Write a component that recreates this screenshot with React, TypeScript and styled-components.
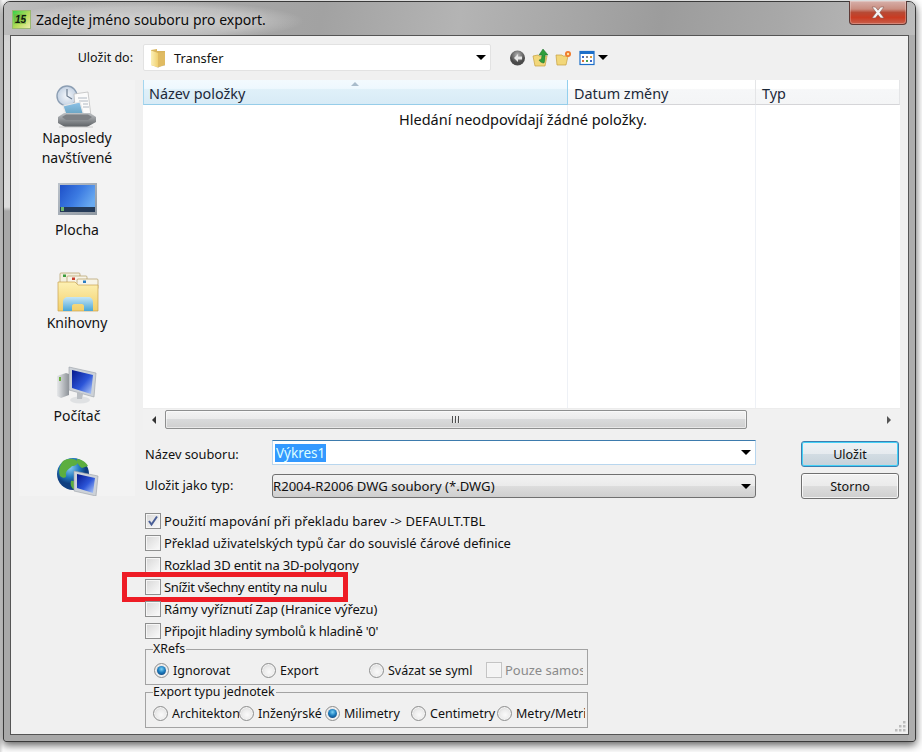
import React from "react";
import styled, { createGlobalStyle } from "styled-components";

const Global = createGlobalStyle`
  html, body { margin: 0; padding: 0; background: #fff; }
  body { font-family: "Noto Sans", "Open Sans", sans-serif; font-size: 13px; color: #111; }
  * { box-sizing: border-box; }
`;

const Stage = styled.div`
  width: 922px; height: 752px; padding: 1px 6px 10px 3px; overflow: hidden;
  background: linear-gradient(90deg, #d9d9d9 0, #fff 3px);
`;
const Win = styled.div`
  width: 913px; height: 741px; display: flex; flex-direction: column;
  border: 1px solid #3a3a3a; border-radius: 7px 7px 3px 3px;
  padding: 0 6px 6px;
  box-shadow: 0 3px 8px rgba(0,0,0,.65);
  background:
    linear-gradient(#adadad,#adadad) right top / 7px 100% no-repeat,
    linear-gradient(180deg, #b9b9b9 0, #d4d4d4 40px, #dcdcdc 205px, #a8a8a8 209px, #a8a8a8 100%);
`;
const TitleBar = styled.div`
  height: 33px; margin: 0 -6px; padding: 0 8px 0 8px; display: flex; align-items: flex-start;
  border-radius: 6px 6px 0 0;
  background:
    radial-gradient(ellipse 150px 20px at 150px 19px, rgba(222,222,222,.7) 0, rgba(215,215,215,.45) 70%, transparent 100%),
    linear-gradient(100deg, #bdbdbd 0, #a9a9a9 18%, #a2a2a2 35%, #b4b4b4 50%, #9c9c9c 72%, #a8a8a8 85%, #bcbcbc 100%);
`;
const TitleIcon = styled.svg`
  width: 19px; height: 19px; margin-top: 8px; flex: none;
`;
const TitleText = styled.div`
  margin: 8px 0 0 5px; font-size: 14px; line-height: 20px; color: #0c0c0c; flex: 1;
  font-family: "Noto Sans", sans-serif;
  text-shadow: 0 0 8px rgba(255,255,255,.6);
`;
const CloseBtn = styled.div`
  width: 58px; height: 24px; margin-top: -1px; flex: none;
  border: 1px solid #5e3a36; border-top: none; border-radius: 0 0 4px 4px;
  display: flex; align-items: center; justify-content: center;
  background: linear-gradient(180deg, #d6b0aa 0, #c98d80 35%, #b74a35 50%, #c93b22 72%, #c8604c 100%);
  box-shadow: inset 0 0 0 1px rgba(255,255,255,.25);
`;
const Panel = styled.div`
  flex: 1; display: flex; flex-direction: column;
  border: 1px solid #555; background: #f0f0f0; padding: 8px 8px 0 8px;
  position: relative;
`;
const CornerGrip = styled.svg`
  position: absolute; right: 1px; bottom: 1px; width: 13px; height: 13px;
`;
const SaveRow = styled.div`
  height: 27px; margin-bottom: 9px; display: flex; align-items: center;
`;
const SaveLabel = styled.div`
  width: 114px; margin-right: 10px; text-align: right; font-size: 12.5px;
`;
const SaveCombo = styled.div`
  width: 348px; height: 27px; background: #fff; border: 1px solid #e2e2e2;
  border-radius: 2px; display: flex; align-items: center; padding: 0 4px 0 6px;
  font-size: 12.8px;
`;
const ComboIcon = styled.svg`
  width: 16px; height: 20px; margin-right: 8px; flex: none;
`;
const Spacer = styled.div`flex: 1;`;
const Caret = styled.span<{ $dir?: "down" | "up" | "left" | "right"; $size?: number; $color?: string }>`
  display: inline-block; width: 0; height: 0; flex: none;
  ${({ $dir = "down", $size = 5, $color = "#000" }) =>
    $dir === "down" ? `border-left:${$size}px solid transparent;border-right:${$size}px solid transparent;border-top:${$size}px solid ${$color};`
    : $dir === "up" ? `border-left:${$size}px solid transparent;border-right:${$size}px solid transparent;border-bottom:${$size}px solid ${$color};`
    : $dir === "left" ? `border-top:${$size}px solid transparent;border-bottom:${$size}px solid transparent;border-right:${$size}px solid ${$color};`
    : `border-top:${$size}px solid transparent;border-bottom:${$size}px solid transparent;border-left:${$size}px solid ${$color};`}
`;
const ToolIcons = styled.div`
  display: flex; align-items: center; margin-left: 18px; gap: 6px;
`;
const ToolIcon = styled.svg`
  width: 17px; height: 18px; flex: none;
`;
const ToolMenu = styled.div`
  display: flex; align-items: center; gap: 2px; margin-left: 1px;
`;

const MainRow = styled.div`
  display: flex; gap: 8px; height: 419px;
`;
const Sidebar = styled.div`
  width: 116px; height: 416px; background: #f3f3f3; overflow: hidden; flex: none;
`;
const Place = styled.div<{ $h: number }>`
  height: ${p => p.$h}px; display: flex; flex-direction: column; align-items: center;
  text-align: center; font-size: 14px; line-height: 20px; color: #111;
`;
const PlaceIcon = styled.svg`
  width: 48px; height: 48px; flex: none;
`;
const RightCol = styled.div`
  width: 757px; flex: none; display: flex; flex-direction: column;
`;
const List = styled.div`
  height: 350px; background: #fff; display: flex; flex-direction: column;
`;
const Header = styled.div`
  height: 25px; display: flex; flex: none;
`;
const HeadCell = styled.div<{ $w: number; $active?: boolean }>`
  width: ${p => p.$w}px; position: relative; font-size: 14.4px; line-height: 27px; padding-left: ${p => (p.$active ? 5 : 6)}px;
  color: #1c2838;
  background: ${p => p.$active
    ? "linear-gradient(180deg,#f3fafe 0,#eef8fe 35%,#dff0f9 40%,#d8ebf6 100%)"
    : "linear-gradient(180deg,#fff 0,#fff 35%,#f6f7f8 40%,#f4f5f6 100%)"};
  border-bottom: 1px solid ${p => (p.$active ? "#96cde9" : "#d5d5d8")};
  border-right: 1px solid ${p => (p.$active ? "#92cfee" : "#e4e5e7")};
  border-left: ${p => (p.$active ? "1px solid #a4d6ef" : "none")};
`;
const SortMark = styled.span`
  position: absolute; left: 207px; top: 1px; line-height: 0;
`;
const ListBody = styled.div`
  flex: 1; text-align: center; font-size: 14.5px; line-height: 20px; padding-top: 4px; padding-left: 3px;
  background:
    linear-gradient(#eef1f6,#eef1f6) 424px 0 / 1px 100% no-repeat,
    linear-gradient(#eef1f6,#eef1f6) 612px 0 / 1px 100% no-repeat,
    #fff;
`;
const HScroll = styled.div`
  height: 22px; flex: none; display: flex; align-items: center; background: #f1f1f1; border-top: 1px solid #ececec;
`;
const ScrollBtn = styled.div`
  width: 22px; height: 19px; flex: none; display: flex; align-items: center; justify-content: center;
`;
const ScrollThumb = styled.div`
  width: 582px; height: 19px; flex: none; border: 1px solid #8e8f8f; border-radius: 2px;
  background: linear-gradient(180deg,#f3f3f3 0,#ebebeb 45%,#d9dadb 50%,#cfcfcf 100%);
  display: flex; align-items: center; justify-content: center; gap: 1px;
  box-shadow: inset 0 0 0 1px rgba(255,255,255,.5);
`;
const Grip = styled.span`
  width: 2px; height: 7px; background: #4f4f4f; border-right: 1px solid #eee;
`;
const FormGrid = styled.div`
  margin-top: 10px; display: grid; grid-template-columns: 129px 484px 98px; column-gap: 0;
  grid-template-rows: 33px 26px; position: relative;
`;
const FieldLabel = styled.div<{ $top: number }>`
  padding-left: 2px; font-size: 12.8px; line-height: 18px; margin-top: ${p => p.$top}px;
`;
const NameInput = styled.div`
  height: 25px; background: #fff; border: 1px solid #b8d6ee; border-top-color: #3d7bad;
  display: flex; align-items: center; padding: 0 4px 0 2px; font-size: 13.5px;
`;
const Selected = styled.span`
  background: #3399ff; color: #dff; padding: 0 1px; line-height: 18px;
`;
const TypeCombo = styled.div`
  height: 24px; margin-top: 1px; border: 1px solid #707070; border-radius: 3px;
  background: linear-gradient(180deg,#f2f2f2 0,#ebebeb 48%,#dddddd 50%,#cfcfcf 100%);
  display: flex; align-items: center; padding: 0 4px 0 0; font-size: 13.1px;
`;
const ButtonCol = styled.div<{ $top: number }>`
  margin-left: 45px; width: 98px; height: 26px; margin-top: ${p => p.$top}px; position: relative;
`;
const DlgButton = styled.div<{ $primary?: boolean }>`
  width: 98px; height: 26px; border-radius: 3px; font-size: 12.6px; display: flex; align-items: center; justify-content: center;
  border: 1px solid ${p => (p.$primary ? "#3c7fb1" : "#707070")};
  background: ${p => p.$primary
    ? "linear-gradient(180deg,#eef2f5 0,#e6ebef 48%,#d2dce3 50%,#c6d2da 100%)"
    : "linear-gradient(180deg,#f2f2f2 0,#ebebeb 48%,#dddddd 50%,#cfcfcf 100%)"};
  box-shadow: inset 0 0 0 1px ${p => (p.$primary ? "#43d1f7" : "rgba(255,255,255,.75)")};
`;
const Options = styled.div`
  margin-top: 11px; margin-left: 126px; width: 443px; display: flex; flex-direction: column;
`;
const OptRow = styled.div<{ $track: number }>`
  height: 22px; display: flex; align-items: center; gap: 3px; position: relative; font-size: 13px; white-space: nowrap;
  letter-spacing: ${p => p.$track}px;
`;
const Highlight = styled.div`
  position: absolute; left: -23px; top: -4px; width: 226px; height: 30px; border: 5px solid #ee1c25;
`;
const Box = styled.span<{ $disabled?: boolean }>`
  width: 16px; height: 16px; flex: none; position: relative; display: inline-block;
  border: 1px solid ${p => (p.$disabled ? "#c4c4c4" : "#8e8f8f")};
  background: ${p => (p.$disabled ? "#f4f4f4" : "linear-gradient(135deg,#d6d6d6 0,#e6e6e6 40%,#fbfbfb 100%)")};
  box-shadow: inset 0 0 0 1px #f6f6f6;
`;
const CheckMark = styled.svg`
  position: absolute; left: 1px; top: 1px; width: 12px; height: 12px;
`;
const Group = styled.fieldset`
  width: 443px; height: 43px; margin: 0; padding: 0; min-width: 0;
  border: 1px solid #a3a3a3; border-radius: 0;
`;
const Legend = styled.legend<{ $left: number }>`
  padding: 0 1px 0 0; margin-left: ${p => p.$left}px; font-size: 12.4px; line-height: 14px; height: 14px;
`;
const GroupRow = styled.div<{ $pad: number }>`
  height: 28px; display: flex; align-items: center; padding-left: ${p => p.$pad}px; font-size: 12.5px; white-space: nowrap;
`;
const RadioItem = styled.div<{ $w: number }>`
  width: ${p => p.$w}px; flex: none; display: flex; align-items: center; gap: 4px; overflow: hidden;
`;
const Radio = styled.span<{ $on?: boolean }>`
  width: 15px; height: 15px; flex: none; border-radius: 50%; border: 1px solid #8e8f8f; position: relative;
  background: radial-gradient(circle at 55% 60%, #fafafa 0, #ececec 45%, #c9c9c9 100%);
  box-shadow: inset 0 0 0 1px #f4f4f4;
  ${p => p.$on ? `&::after { content: ""; position: absolute; left: 2px; top: 2px; width: 9px; height: 9px; border-radius: 50%;
    background: radial-gradient(circle at 50% 35%, #7fd3f5 0, #1e7fc0 45%, #0b2f66 100%); }` : ""}
`;
const Disabled = styled.span`color: #8a8a8a; margin-left: -1px; font-size: 13px;`;

const Folder = () => (
  <ComboIcon viewBox="0 0 16 20">
    <defs><linearGradient id="fo" x1="0" y1="0" x2="1" y2="0"><stop offset="0" stopColor="#fbf0b8"/><stop offset="1" stopColor="#f0d070"/></linearGradient></defs>
    <path d="M1 2l6-1v2l8 0v14l-8 2L1 17z" fill="#d8b45c"/>
    <path d="M1 2.500L8 5v14.500L1 17z" fill="url(#fo)"/>
    <path d="M8 5l7-1v13l-7 2.500z" fill="#e0bb62"/>
    <path d="M15 17l-7 2.500h-2l9-2z" fill="#b9b9b9"/>
  </ComboIcon>
);

const RecentIcon = () => (
  <PlaceIcon viewBox="0 0 48 48">
    <defs>
      <radialGradient id="cl"><stop offset="0" stopColor="#f4f7fb"/><stop offset="1" stopColor="#c3d1e2"/></radialGradient>
      <linearGradient id="tr" x1="0" y1="0" x2="0" y2="1"><stop offset="0" stopColor="#bfc2c5"/><stop offset="1" stopColor="#5c6064"/></linearGradient>
      <linearGradient id="ph" x1="0" y1="0" x2="0" y2="1"><stop offset="0" stopColor="#8ec3ea"/><stop offset=".55" stopColor="#6fa8c7"/><stop offset="1" stopColor="#4f8a3d"/></linearGradient>
    </defs>
    <circle cx="14" cy="16" r="10" fill="url(#cl)" stroke="#8c9eb3" strokeWidth="1.400"/>
    <path d="M14 9v7l5 3" fill="none" stroke="#6d7d90" strokeWidth="1.200"/>
    <path d="M21 14l14-2 3 24-15 2z" fill="#fbfbfb" stroke="#b8b8b8" strokeWidth=".7"/>
    <path d="M25 18h9M26 21h9M30 24h5M30 27h6" stroke="#a7b0bb" strokeWidth=".9"/>
    <path d="M10 26l17-4 4 14-16 5z" fill="url(#ph)" stroke="#e8e8e8" strokeWidth="1.200"/>
    <path d="M5 37l6-4h26l6 4v5l-9 5H12l-7-4z" fill="url(#tr)"/>
    <path d="M9 37l4-2.500h22l4 2.500-4 3H13z" fill="#7e8185"/>
    <path d="M6 47h34" stroke="#ccc" strokeWidth="1"/>
  </PlaceIcon>
);
const DesktopIcon = () => (
  <PlaceIcon viewBox="0 0 48 48">
    <defs>
      <linearGradient id="ds" x1="0" y1="0" x2="1" y2=".5"><stop offset="0" stopColor="#1e50c8"/><stop offset=".55" stopColor="#3c7be2"/><stop offset="1" stopColor="#69aaf0"/></linearGradient>
      <linearGradient id="dr" x1="0" y1="0" x2="1" y2="1"><stop offset="0" stopColor="#bcc3cb"/><stop offset="1" stopColor="#8e97a1"/></linearGradient>
    </defs>
    <rect x="5" y="11" width="39" height="32" fill="url(#dr)"/>
    <rect x="7" y="13" width="35" height="27" fill="url(#ds)"/>
    <rect x="7" y="35" width="35" height="5" fill="#243a58"/>
    <rect x="8" y="35" width="3" height="4" fill="#6fb46f"/>
  </PlaceIcon>
);
const LibraryIcon = () => (
  <PlaceIcon viewBox="0 0 48 48">
    <defs>
      <linearGradient id="lf" x1="0" y1="0" x2="0" y2="1"><stop offset="0" stopColor="#fdf1b4"/><stop offset="1" stopColor="#f2cf6a"/></linearGradient>
      <linearGradient id="lb" x1="0" y1="0" x2="0" y2="1"><stop offset="0" stopColor="#c6e6f5"/><stop offset="1" stopColor="#4aa6d6"/></linearGradient>
    </defs>
    <rect x="7" y="8" width="20" height="10" rx="1" fill="#f3f0e0" stroke="#b39c63" strokeWidth=".7"/>
    <rect x="14" y="11" width="20" height="10" rx="1" fill="#f7f4e8" stroke="#b39c63" strokeWidth=".7"/>
    <rect x="24" y="14" width="21" height="10" rx="1" fill="#f7f4e8" stroke="#b39c63" strokeWidth=".7"/>
    <rect x="10" y="9.500" width="3" height="2.500" fill="#3c9c3c"/>
    <rect x="19" y="12.500" width="3" height="2.500" fill="#c8402e"/>
    <rect x="30" y="15.500" width="3" height="2.500" fill="#2a7dc4"/>
    <path d="M5 17h17l3 3h20v26H5z" fill="url(#lf)" stroke="#c9a24e" strokeWidth=".7"/>
    <path d="M10 46v-9c0-3 2-5 5-5h20c3 0 5 2 5 5v9h-9v-5c0-1-1-2-2-2H21c-1 0-2 1-2 2v5z" fill="url(#lb)"/>
  </PlaceIcon>
);
const ComputerIcon = () => (
  <PlaceIcon viewBox="0 0 48 48">
    <defs>
      <linearGradient id="cs" x1="0" y1="0" x2="1" y2="1"><stop offset="0" stopColor="#06188c"/><stop offset=".55" stopColor="#2c55d8"/><stop offset="1" stopColor="#b8d0fa"/></linearGradient>
      <linearGradient id="cc" x1="0" y1="0" x2="1" y2="0"><stop offset="0" stopColor="#e6e8ea"/><stop offset="1" stopColor="#8d9298"/></linearGradient>
    </defs>
    <path d="M4 18l9-3 3 1v21l-8 3-4-2z" fill="url(#cc)"/>
    <rect x="6" y="19" width="2" height="4" fill="#6cae3e"/>
    <path d="M16 9l27 6-2 24-25-7z" fill="#cdd2d8" stroke="#9aa0a6" strokeWidth=".6"/>
    <path d="M19 12l21 5-2 19-19-6z" fill="url(#cs)"/>
    <ellipse cx="27" cy="42" rx="10" ry="3.500" fill="#dfe1e3"/>
    <path d="M24 34l6 2-1 5h-5z" fill="#babec3"/>
  </PlaceIcon>
);
const NetworkIcon = () => (
  <PlaceIcon viewBox="0 0 48 48">
    <defs>
      <radialGradient id="gl" cx=".4" cy=".3"><stop offset="0" stopColor="#8ed0f2"/><stop offset=".6" stopColor="#2278bf"/><stop offset="1" stopColor="#0f3f80"/></radialGradient>
      <linearGradient id="ns" x1="0" y1="0" x2="1" y2="1"><stop offset="0" stopColor="#06188c"/><stop offset=".55" stopColor="#2c55d8"/><stop offset="1" stopColor="#b8d0fa"/></linearGradient>
    </defs>
    <circle cx="20" cy="23" r="16" fill="url(#gl)"/>
    <path d="M10 10c5-3 11-3 14 0 2 3-2 5-5 5-2 3-7 4-6 9 1 3-3 4-6 1-2-6 0-11 3-15zM24 8c4 0 9 3 11 7l-6 2c-3-2-6-6-5-9zM18 30c4-1 6 2 5 7l-3 1c-2-2-3-5-2-8z" fill="#5cae3f"/>
    <path d="M21 20l24 5-2 20-22-5z" fill="#cdd2d8" stroke="#9aa0a6" strokeWidth=".6"/>
    <path d="M24 23l18 4-2 15-16-5z" fill="url(#ns)"/>
  </PlaceIcon>
);

export default function App() {
  return (
    <Stage>
      <Global />
      <Win>
        <TitleBar>
          <TitleIcon viewBox="0 0 19 19">
            <defs><linearGradient id="ti" x1="0" y1="0" x2="1" y2="1"><stop offset="0" stopColor="#2fd04a"/><stop offset=".55" stopColor="#b8dc5a"/><stop offset="1" stopColor="#f0efb0"/></linearGradient></defs>
            <rect x="0.500" y="0.500" width="18" height="18" fill="url(#ti)" stroke="#9ab870"/>
            <rect x="2" y="4" width="12" height="10" fill="#6fae3c" opacity=".55"/>
            <text x="3" y="13" fontSize="10" fontStyle="italic" fontWeight="700" fill="#0e1a0e" fontFamily="Liberation Sans, sans-serif">15</text>
          </TitleIcon>
          <TitleText>Zadejte jméno souboru pro export.</TitleText>
          <CloseBtn>
            <svg width="16" height="13" viewBox="0 0 16 13">
              <path d="M2 1h3.400L8 4.200 10.600 1H14L9.800 6.500 14 12h-3.400L8 8.800 5.400 12H2l4.200-5.500z" fill="#f4f4f4" stroke="#8a5a52" strokeWidth=".6"/>
            </svg>
          </CloseBtn>
        </TitleBar>
        <Panel>
          <SaveRow>
            <SaveLabel>Uložit do:</SaveLabel>
            <SaveCombo>
              <Folder />
              Transfer
              <Spacer />
              <Caret $size={5} />
            </SaveCombo>
            <ToolIcons>
              <ToolIcon viewBox="0 0 17 18">
                <defs><radialGradient id="bk" cx=".5" cy=".3"><stop offset="0" stopColor="#b5b5b5"/><stop offset="1" stopColor="#4a4a4a"/></radialGradient></defs>
                <circle cx="8.500" cy="9" r="7.500" fill="url(#bk)"/>
                <path d="M9 5L5 9l4 4v-2.500h4v-3H9z" fill="#e6e6e6"/>
              </ToolIcon>
              <ToolIcon viewBox="0 0 17 18">
                <path d="M1 7l5-1 1 1h8l-2 10H3z" fill="#f2d77a" stroke="#c59f3f" strokeWidth=".7"/>
                <path d="M11 0l5 6h-3c0 3 0 6-1 8-2 0-4-1-5-3 2 0 3-2 3-5H7z" fill="#2f9e3c" stroke="#1b6d28" strokeWidth=".5"/>
              </ToolIcon>
              <ToolIcon viewBox="0 0 17 18">
                <path d="M1 6h6l1 1h5l-2 9H2z" fill="#f2d77a" stroke="#c59f3f" strokeWidth=".7"/>
                <circle cx="13" cy="5" r="3" fill="#f07a2a"/>
                <circle cx="13" cy="5" r="1.200" fill="#fde3a0"/>
              </ToolIcon>
              <ToolMenu>
                <ToolIcon viewBox="0 0 17 18">
                  <rect x="1" y="2.500" width="14" height="13" fill="#fff" stroke="#1c6fc9" strokeWidth="1.200"/>
                  <rect x="1" y="2.500" width="14" height="2.500" fill="#1c6fc9"/>
                  <rect x="3" y="7" width="2" height="2" fill="#3a66c4"/><rect x="7" y="7" width="2" height="2" fill="#8a8a8a"/><rect x="11" y="7" width="2" height="2" fill="#d99a3a"/>
                  <rect x="3" y="11" width="2" height="2" fill="#d9703a"/><rect x="7" y="11" width="2" height="2" fill="#4aa24a"/><rect x="11" y="11" width="2" height="2" fill="#3a66c4"/>
                </ToolIcon>
                <Caret $size={5} />
              </ToolMenu>
            </ToolIcons>
          </SaveRow>
          <MainRow>
            <Sidebar>
              <Place $h={92}><RecentIcon /><span>Naposledy<br />navštívené</span></Place>
              <Place $h={93}><DesktopIcon /><span>Plocha</span></Place>
              <Place $h={93}><LibraryIcon /><span>Knihovny</span></Place>
              <Place $h={93}><ComputerIcon /><span>Počítač</span></Place>
              <Place $h={93}><NetworkIcon /></Place>
            </Sidebar>
            <RightCol>
              <List>
                <Header>
                  <HeadCell $w={425} $active>Název položky<SortMark><Caret $dir="up" $size={4} $color="#a9bccb" /></SortMark></HeadCell>
                  <HeadCell $w={188}>Datum změny</HeadCell>
                  <HeadCell $w={144}>Typ</HeadCell>
                </Header>
                <ListBody>Hledání neodpovídají žádné položky.</ListBody>
                <HScroll>
                  <ScrollBtn><Caret $dir="left" $size={4} $color="#333" /></ScrollBtn>
                  <ScrollThumb><Grip /><Grip /><Grip /></ScrollThumb>
                  <Spacer />
                  <ScrollBtn><Caret $dir="right" $size={4} $color="#555" /></ScrollBtn>
                </HScroll>
              </List>
              <FormGrid>
                <FieldLabel $top={5}>Název souboru:</FieldLabel>
                <NameInput><Selected>Výkres1</Selected><Spacer /><Caret $size={5} /></NameInput>
                <ButtonCol $top={1}><DlgButton $primary>Uložit</DlgButton></ButtonCol>
                <FieldLabel $top={3}>Uložit jako typ:</FieldLabel>
                <TypeCombo>R2004-R2006 DWG soubory (*.DWG)<Spacer /><Caret $size={5} /></TypeCombo>
                <ButtonCol $top={0}><DlgButton>Storno</DlgButton></ButtonCol>
              </FormGrid>
            </RightCol>
          </MainRow>
          <Options>
            <OptRow $track={0.08}>
              <Box><CheckMark viewBox="0 0 12 12"><path d="M2 6l2.500 3.500L10 1.500" fill="none" stroke="#4a5f97" strokeWidth="2"/></CheckMark></Box>
              Použití mapování při překladu barev -&gt; DEFAULT.TBL
            </OptRow>
            <OptRow $track={-0.05}><Box />Překlad uživatelských typů čar do souvislé čárové definice</OptRow>
            <OptRow $track={-0.13}><Box />Rozklad 3D entit na 3D-polygony</OptRow>
            <OptRow $track={-0.34}><Box />Snížit všechny entity na nulu<Highlight /></OptRow>
            <OptRow $track={-0.11}><Box />Rámy vyříznutí Zap (Hranice výřezu)</OptRow>
            <OptRow $track={-0.24}><Box />Připojit hladiny symbolů k hladině '0'</OptRow>
            <Group>
              <Legend $left={7}>XRefs</Legend>
              <GroupRow $pad={8}>
                <RadioItem $w={107}><Radio $on />Ignorovat</RadioItem>
                <RadioItem $w={108}><Radio />Export</RadioItem>
                <RadioItem $w={117}><Radio />Svázat se syml</RadioItem>
                <RadioItem $w={97}><Box $disabled /><Disabled>Pouze samostatné</Disabled></RadioItem>
              </GroupRow>
            </Group>
            <Group>
              <Legend $left={7}>Export typu jednotek</Legend>
              <GroupRow $pad={7}>
                <RadioItem $w={86}><Radio />Architekton</RadioItem>
                <RadioItem $w={86}><Radio />Inženýrské</RadioItem>
                <RadioItem $w={86}><Radio $on />Milimetry</RadioItem>
                <RadioItem $w={86}><Radio />Centimetry</RadioItem>
                <RadioItem $w={88}><Radio />Metry/Metri</RadioItem>
              </GroupRow>
            </Group>
          </Options>
          <CornerGrip viewBox="0 0 13 13">
            <g fill="#bdbdbd">
              <rect x="9" y="1" width="2.500" height="2.500"/><rect x="5" y="5" width="2.500" height="2.500"/><rect x="9" y="5" width="2.500" height="2.500"/>
              <rect x="1" y="9" width="2.500" height="2.500"/><rect x="5" y="9" width="2.500" height="2.500"/><rect x="9" y="9" width="2.500" height="2.500"/>
            </g>
          </CornerGrip>
        </Panel>
      </Win>
    </Stage>
  );
}
